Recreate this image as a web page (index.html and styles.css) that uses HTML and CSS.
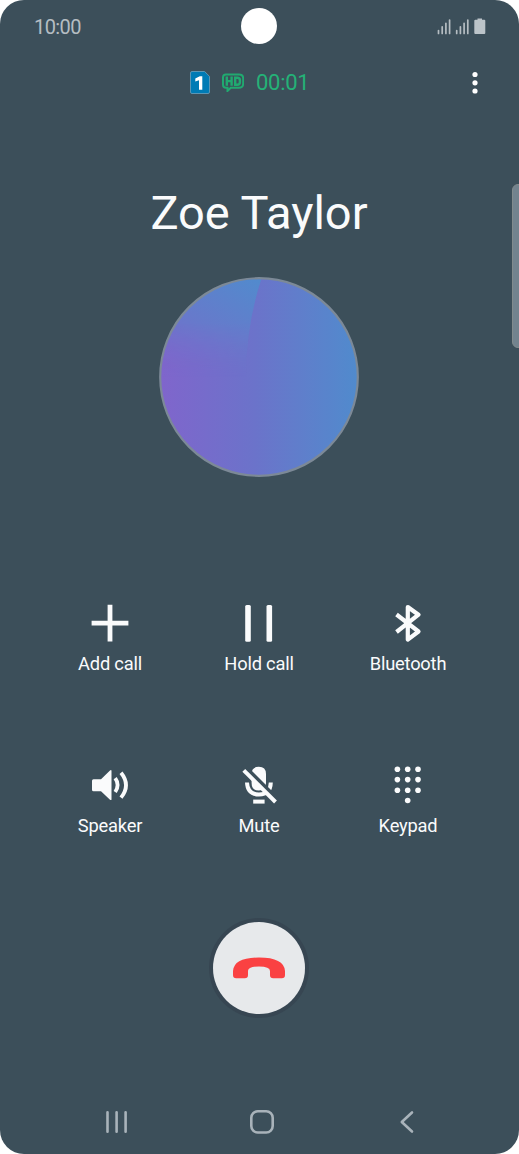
FILE: index.html
```html
<!DOCTYPE html>
<html lang="en">
<head>
  <meta charset="UTF-8">
  <title>Call</title>
  <link rel="stylesheet" href="styles.css">
</head>
<body>

<div class="phone">
  <!-- Status bar -->
  <div class="status">
    <span class="clock">10:00</span>
    <svg class="status-icons" width="50" height="18" viewBox="0 0 50 18">
      <path class="bars" d="M1.5 12.5v3M5.2 8.8v6.700M8.900 5.300v10.200M12.600 2v13.500M19.700 12.500v3M23.400 8.800v6.700M27.100 5.300v10.200M30.800 2v13.500"/>
      <path class="battery" d="M40.500 .5h4.500v1.300h2.300q1 0 1 1v12.200q0 1-1 1h-9q-1 0-1-1v-12.200q0-1 1-1h2.200z"/>
    </svg>
    <div class="camera"></div>
  </div>

  <!-- Call info -->
  <div class="info">
    <svg width="20" height="23" viewBox="0 0 20 23">
      <path class="sim" d="M2 .5h12.600l4.900 4.900v15.600q0 1.500-1.500 1.500h-16q-1.500 0-1.500-1.500v-19q0-1.500 1.500-1.500z"/>
      <path class="sim-number" d="M5.300 7.600l4.500-2.300h2.500v13.400h-3.300v-9.500l-3.700 1.300z"/>
    </svg>
    <svg class="hd" width="22" height="19" viewBox="0 0 22 19">
      <path class="hd-box" d="M4 1.500h13q4.200 0 4.200 4v5q0 4.200-4.200 4.200h-8.200l-3.300 3.300v-3.300h-1.500q-3 0-3-3v-7.200q0-3 3-3z"/>
      <path class="hd-mark" d="M4.800 3.500v9.300M9.600 3.500v9.300M4.800 8.100h4.800M13.200 4.700v7h2q2.700 0 2.700-2.500v-2q0-2.500-2.700-2.500z"/>
    </svg>
    <span class="timer">00:01</span>
    <svg class="more" width="6" height="24" viewBox="0 0 6 24">
      <circle cx="3" cy="3.500" r="2.600"/>
      <circle cx="3" cy="11.800" r="2.600"/>
      <circle cx="3" cy="20" r="2.600"/>
    </svg>
  </div>

  <!-- Contact -->
  <h1>Zoe Taylor</h1>
  <svg class="avatar" width="200" height="200" viewBox="0 0 200 200">
    <defs>
      <linearGradient id="base" gradientUnits="userSpaceOnUse" x1="0" y1="0" x2="200" y2="0">
        <stop offset="0" stop-color="#8065cc"/>
        <stop offset=".48" stop-color="#6b73ca"/>
        <stop offset=".68" stop-color="#617dcb"/>
        <stop offset="1" stop-color="#508bcd"/>
      </linearGradient>
      <linearGradient id="corner" gradientUnits="userSpaceOnUse" x1="20" y1="108" x2="90" y2="-2">
        <stop offset="0" stop-color="#7b68cb"/>
        <stop offset=".5" stop-color="#667acb"/>
        <stop offset="1" stop-color="#528acd"/>
      </linearGradient>
      <linearGradient id="fade" x1="0" y1="0" x2="0" y2="1">
        <stop offset=".45" stop-color="#fff"/>
        <stop offset="1" stop-color="#000"/>
      </linearGradient>
      <mask id="cornerMask"><rect width="105" height="100" fill="url(#fade)"/></mask>
      <clipPath id="round"><circle cx="100" cy="100" r="99"/></clipPath>
    </defs>
    <g clip-path="url(#round)">
      <rect width="200" height="200" fill="url(#base)"/>
      <path d="M0 0h103q-16 48-16 100h-87z" fill="url(#corner)" mask="url(#cornerMask)"/>
    </g>
    <circle class="ring" cx="100" cy="100" r="98.800"/>
  </svg>

  <div class="edge-handle"></div>

  <!-- Call actions -->
  <div class="actions">
    <div class="action">
      <svg width="40" height="40" viewBox="0 0 40 40">
        <path d="M20 1.700v36.800M1.600 20.100h36.800" stroke-width="4.800"/>
      </svg>
      <span>Add call</span>
    </div>
    <div class="action">
      <svg width="40" height="40" viewBox="0 0 40 40">
        <rect class="fill" x="6.200" y="2" width="5.600" height="36.800" rx="1.500"/>
        <rect class="fill" x="27.500" y="2" width="5.600" height="36.800" rx="1.500"/>
      </svg>
      <span>Hold call</span>
    </div>
    <div class="action">
      <svg width="40" height="40" viewBox="0 0 40 40">
        <path d="M8.500 11.500L30.500 28.500L19.800 36.600V4L30.500 11.700L8.500 29" stroke-width="4.200" stroke-linejoin="round"/>
      </svg>
      <span>Bluetooth</span>
    </div>
    <div class="action">
      <svg width="40" height="40" viewBox="0 0 40 40">
        <path class="fill" d="M3.500 14.200h7.500l9-8.700q1.500-1 1.500.5v28.200q0 1.500-1.500.5l-9-8.500h-7.500q-1.500 0-1.500-1.500v-9q0-1.500 1.500-1.500z"/>
        <path d="M25.200 13.200q4.800 6.800 0 13.800M31 7.800q10 12.400 0 24.800" stroke-width="3.800"/>
      </svg>
      <span>Speaker</span>
    </div>
    <div class="action">
      <svg width="40" height="40" viewBox="0 0 40 40">
        <path class="fill" d="M12.600 9q0-7.200 7.200-7.200T27 9v9q0 7.500-7.200 7.500T12.600 18z"/>
        <path d="M8 17.500Q8.500 29.500 20 29.500T31.800 17.500" stroke-width="4"/>
        <path class="gap" d="M4 .5L39 35.500" stroke-width="5"/>
        <path d="M4.800 5.300L36.500 37" stroke-width="4"/>
        <path d="M14.200 36.600h11.400" stroke-width="4"/>
      </svg>
      <span>Mute</span>
    </div>
    <div class="action">
      <svg class="dots" width="40" height="40" viewBox="0 0 40 40">
        <circle cx="9.400" cy="4.300" r="2.800"/><circle cx="19.700" cy="4.300" r="2.800"/><circle cx="30" cy="4.300" r="2.800"/>
        <circle cx="9.400" cy="14.600" r="2.800"/><circle cx="19.700" cy="14.600" r="2.800"/><circle cx="30" cy="14.600" r="2.800"/>
        <circle cx="9.400" cy="25.200" r="2.800"/><circle cx="19.700" cy="25.200" r="2.800"/><circle cx="30" cy="25.200" r="2.800"/>
        <circle cx="19.700" cy="35.500" r="2.800"/>
      </svg>
      <span>Keypad</span>
    </div>
  </div>

  <button class="end-call">
    <svg width="52" height="22" viewBox="0 0 52 22">
      <path d="M0 18V14Q1 .5 26 .5T52 14v4q0 3.200-3.200 3.200h-8.600q-3.200 0-3.200-3.200v-4q0-4.500-11-4.500t-11 4.500v4q0 3.200-3.200 3.200h-8.600q-3.200 0-3.200-3.200z"/>
    </svg>
  </button>

  <!-- Navigation bar -->
  <div class="nav">
    <svg width="24" height="24" viewBox="0 0 24 24"><path d="M2.500 2.300v19.400M11.600 2.300v19.400M20.600 2.300v19.400"/></svg>
    <svg width="24" height="24" viewBox="0 0 24 24"><rect x="1.300" y="1.300" width="21.400" height="21.200" rx="6.500"/></svg>
    <svg width="24" height="24" viewBox="0 0 24 24"><path d="M17 2.500L6.800 12L17 21.500"/></svg>
  </div>
</div>

</body>
</html>
```

FILE: styles.css
```css
body {
  margin: 0;
  background: #fff;
  font-family: Roboto, sans-serif;
}
.phone {
  position: relative;
  display: flex;
  flex-direction: column;
  align-items: center;
  box-sizing: border-box;
  width: 519px;
  height: 1154px;
  padding-right: 1px;
  background: #3c4f5a;
  border-radius: 24px;
  overflow: hidden;
  color: #fafbfc;
}
svg { display: block; flex: none; }

.status {
  position: relative;
  display: flex;
  justify-content: space-between;
  align-items: center;
  box-sizing: border-box;
  width: 100%;
  height: 54px;
  padding: 0 31px 0 34px;
}
.clock { font-size: 20px; letter-spacing: -0.6px; color: #b5bdc2; }
.bars { stroke: #b5bdc2; stroke-width: 1.7; stroke-linecap: round; }
.battery { fill: #bcc4c9; }
.camera {
  position: absolute;
  left: 241px;
  top: 8px;
  width: 36px;
  height: 36px;
  border-radius: 50%;
  background: #fff;
}

.info {
  display: flex;
  align-items: center;
  box-sizing: border-box;
  width: 100%;
  height: 57px;
  padding: 0 40px 0 190px;
}
.sim { fill: #007bb5; stroke: #5d95b3; stroke-width: 1; }
.sim-number { fill: #fff; }
.hd { margin-left: 12px; }
.hd-box { fill: none; stroke: #20aa70; stroke-width: 2; }
.hd-mark { fill: none; stroke: #20aa70; stroke-width: 2.4; }
.timer { margin-left: 12px; font-size: 22px; letter-spacing: -0.3px; color: #24b277; }
.more { margin-left: auto; fill: #fff; }

h1 {
  margin: 72px 0 0;
  height: 60px;
  line-height: 60px;
  font-size: 47px;
  font-weight: 400;
}
.avatar { margin-top: 34px; }
.ring { fill: none; stroke: #7c8997; stroke-width: 2.2; }
.edge-handle {
  position: absolute;
  right: -6px;
  top: 184px;
  width: 11px;
  height: 162px;
  border: 1px solid #828b8d;
  border-radius: 6px;
  background: #73838e;
}

.actions {
  display: grid;
  grid-template-columns: repeat(3, 149px);
  row-gap: 89px;
  margin-top: 126px;
}
.action {
  display: flex;
  flex-direction: column;
  align-items: center;
  gap: 9px;
  font-size: 18.3px;
  letter-spacing: -0.2px;
  line-height: 24px;
}
.action path { fill: none; stroke: #fafbfc; }
.action .fill { fill: #fafbfc; stroke: none; }
.action .gap { stroke: #3c4f5a; }
.dots { fill: #fafbfc; }

.end-call {
  display: flex;
  justify-content: center;
  align-items: center;
  width: 92px;
  height: 92px;
  margin: 84px 0 0;
  padding: 0;
  border: none;
  border-radius: 50%;
  background: #e7e9eb;
  box-shadow: 0 0 0 4px #374652;
}
.end-call path { fill: #fa4142; }

.nav {
  display: flex;
  justify-content: space-between;
  align-items: center;
  box-sizing: border-box;
  width: 100%;
  margin-top: 96px;
  padding: 0 99px 0 105px;
}
.nav svg {
  fill: none;
  stroke: #a9b3ba;
  stroke-width: 2.6;
  stroke-linecap: round;
  stroke-linejoin: round;
}
```
